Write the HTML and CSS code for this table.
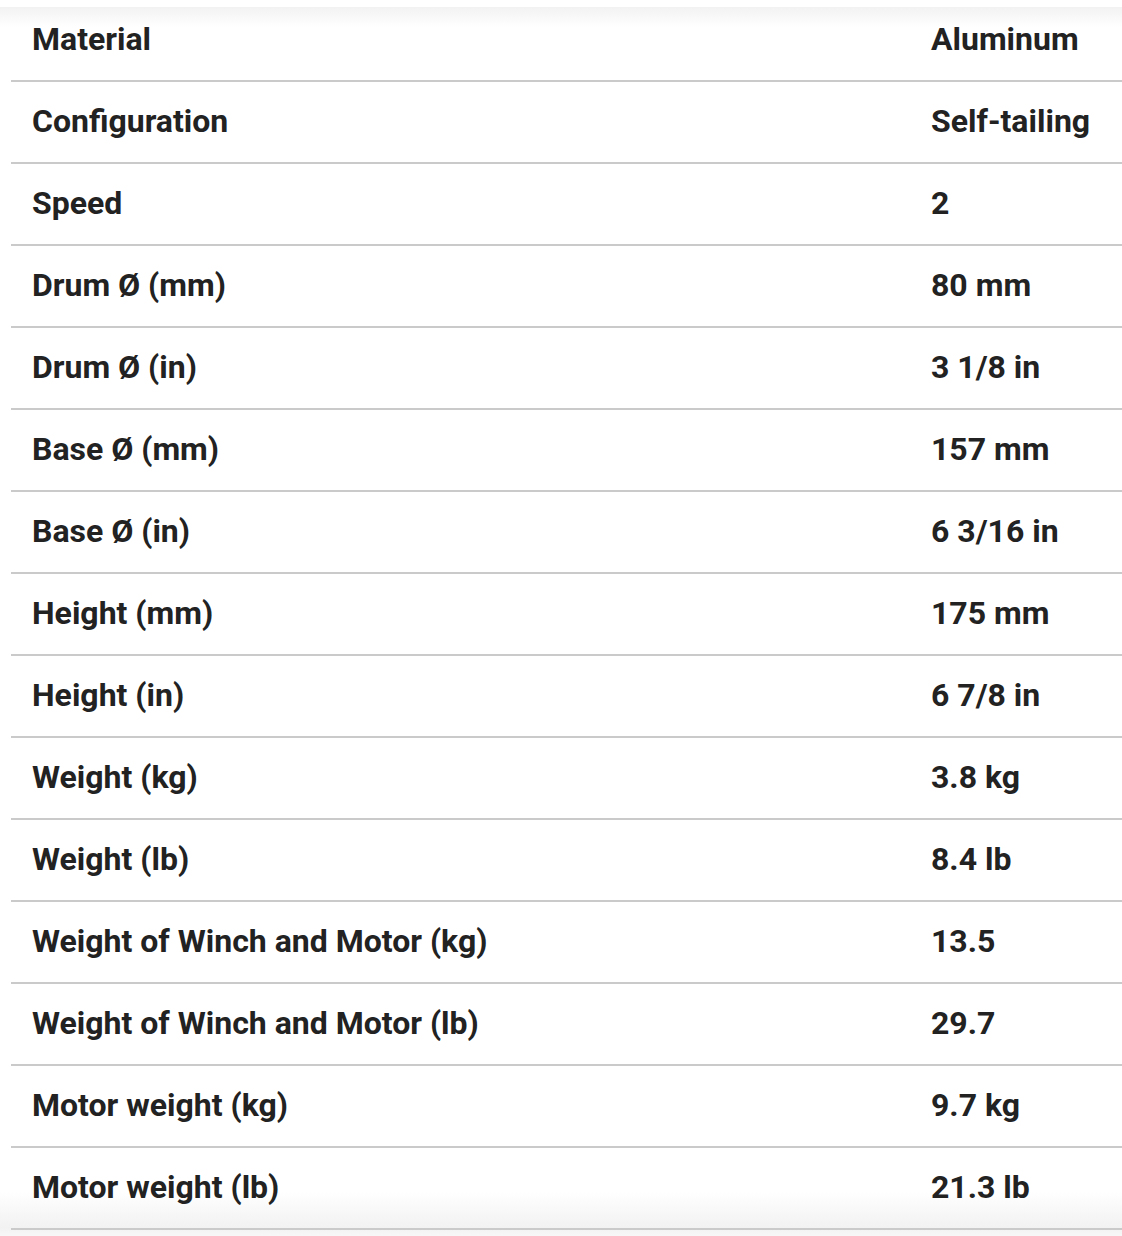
FILE: index.html
```html
<!DOCTYPE html>
<html>
<head>
<meta charset="utf-8">
<link rel="stylesheet" href="styles.css">
</head>
<body>
<div class="specs">
  <table class="spec-table">
    <tbody>
      <tr><td class="k">Material</td><td class="v">Aluminum</td></tr>
      <tr><td class="k">Configuration</td><td class="v">Self-tailing</td></tr>
      <tr><td class="k">Speed</td><td class="v">2</td></tr>
      <tr><td class="k">Drum Ø (mm)</td><td class="v">80 mm</td></tr>
      <tr><td class="k">Drum Ø (in)</td><td class="v">3 1/8 in</td></tr>
      <tr><td class="k">Base Ø (mm)</td><td class="v">157 mm</td></tr>
      <tr><td class="k">Base Ø (in)</td><td class="v">6 3/16 in</td></tr>
      <tr><td class="k">Height (mm)</td><td class="v">175 mm</td></tr>
      <tr><td class="k">Height (in)</td><td class="v">6 7/8 in</td></tr>
      <tr><td class="k">Weight (kg)</td><td class="v">3.8 kg</td></tr>
      <tr><td class="k">Weight (lb)</td><td class="v">8.4 lb</td></tr>
      <tr><td class="k">Weight of Winch and Motor (kg)</td><td class="v">13.5</td></tr>
      <tr><td class="k">Weight of Winch and Motor (lb)</td><td class="v">29.7</td></tr>
      <tr><td class="k">Motor weight (kg)</td><td class="v">9.7 kg</td></tr>
      <tr><td class="k">Motor weight (lb)</td><td class="v">21.3 lb</td></tr>
    </tbody>
  </table>
</div>
</body>
</html>
```

FILE: styles.css
```css
html, body {
  margin: 0;
  padding: 0;
  background: #ffffff;
}
body {
  font-family: Roboto, "Liberation Sans", sans-serif;
  color: #222222;
}
.specs {
  position: relative;
  width: 1122px;
  height: 1236px;
  overflow: hidden;
  background: #ffffff;
}
.specs::before {
  content: "";
  position: absolute;
  left: 0;
  right: 0;
  top: 7px;
  height: 20px;
  background: linear-gradient(to bottom, #f2f2f2, rgba(255,255,255,0));
  pointer-events: none;
}
.specs::after {
  content: "";
  position: absolute;
  left: 0;
  right: 0;
  top: 1192px;
  height: 44px;
  background: linear-gradient(to bottom, rgba(242,242,242,0) 0%, rgba(242,242,242,1) 80%, rgba(247,247,247,1) 100%);
  pointer-events: none;
}
.spec-table {
  position: relative;
  z-index: 1;
  margin-left: 11px;
  width: 1111px;
  border-collapse: collapse;
}
.spec-table td {
  height: 78px;
  padding: 0 0 2px 0;
  border-bottom: 2px solid #cacaca;
  font-size: 32px;
  font-weight: 700;
  vertical-align: middle;
  white-space: nowrap;
}
.spec-table td.k {
  padding-left: 21px;
  width: 899px;
}
.spec-table td.v {
  padding-left: 0;
}
```
